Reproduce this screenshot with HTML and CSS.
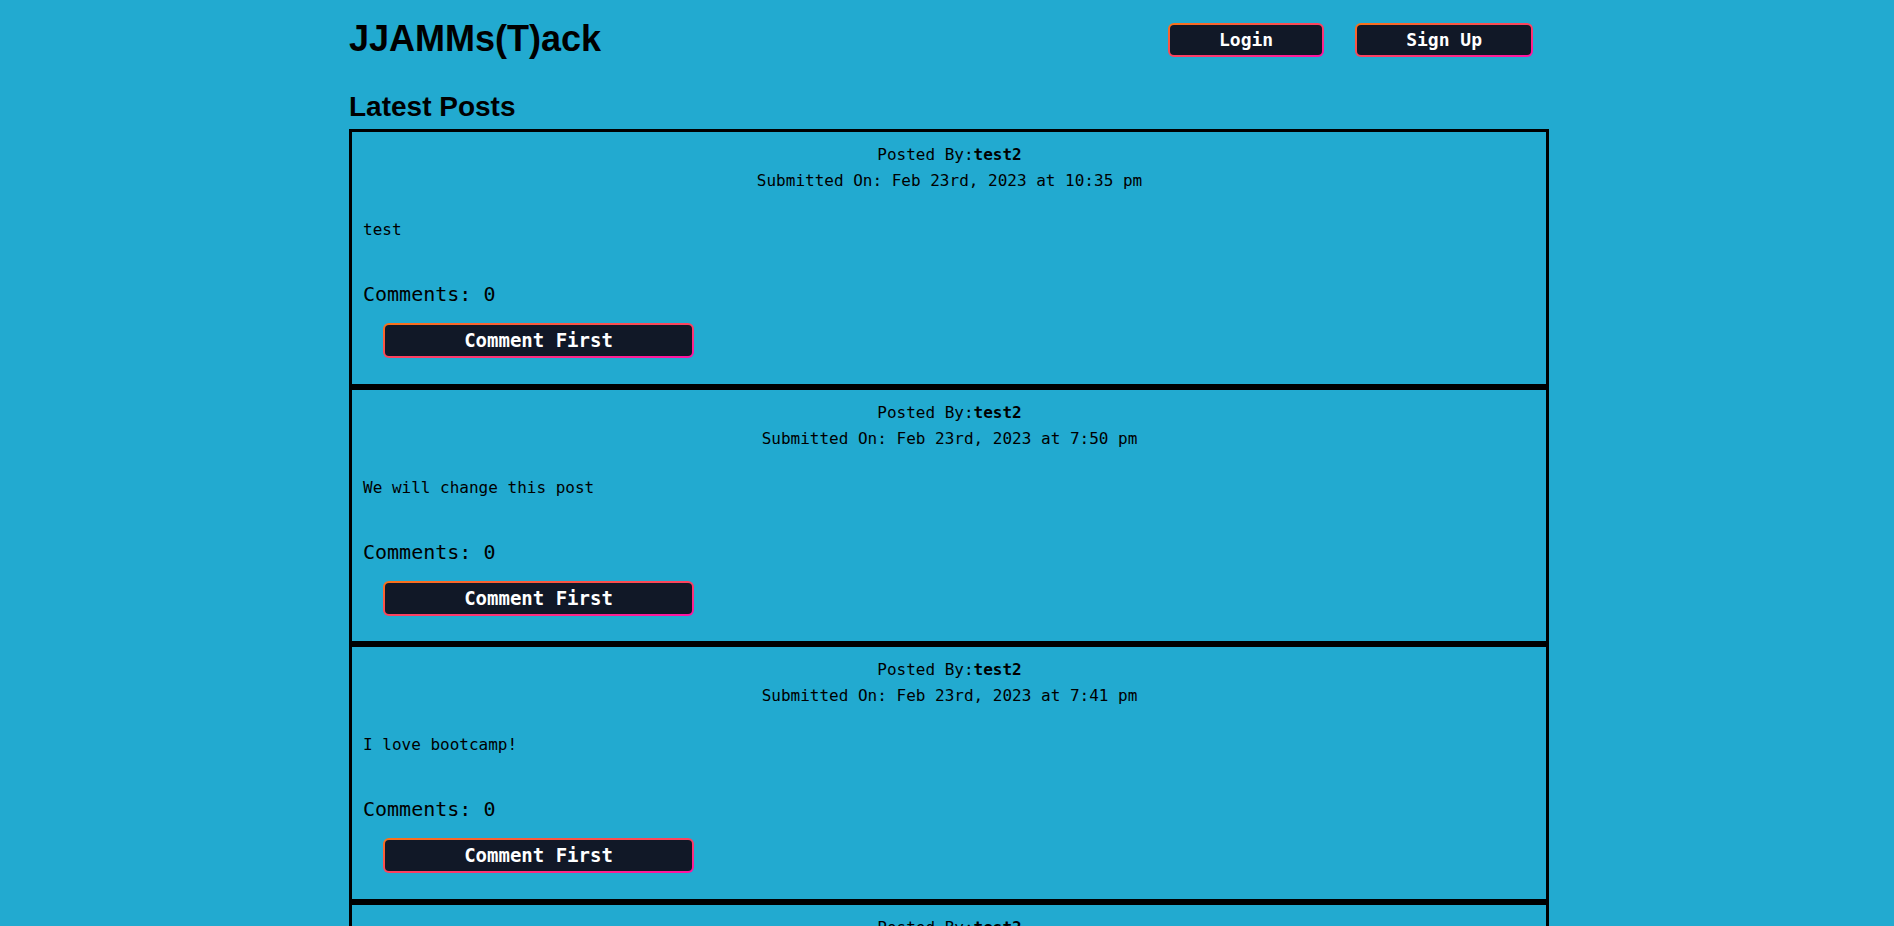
FILE: index.html
```html
<!DOCTYPE html>
<html lang="en">
<head>
<meta charset="utf-8">
<title>JJAMMs(T)ack</title>
<link rel="stylesheet" href="styles.css">
</head>
<body>
<div class="page">
  <header class="topbar">
    <h1 class="brand">JJAMMs(T)ack</h1>
    <nav class="nav">
      <a class="grad-btn nav-btn" href="#"><span>Login</span></a>
      <a class="grad-btn nav-btn" href="#"><span>Sign Up</span></a>
    </nav>
  </header>
  <h2 class="section-title">Latest Posts</h2>
  <div class="posts">
    <article class="post">
      <div class="post-meta">
        <p>Posted By:<strong>test2</strong></p>
        <p>Submitted On: Feb 23rd, 2023 at 10:35 pm</p>
      </div>
      <p class="post-body">test</p>
      <h3 class="comments">Comments: 0</h3>
      <a class="grad-btn comment-btn" href="#"><span>Comment First</span></a>
    </article>
    <article class="post">
      <div class="post-meta">
        <p>Posted By:<strong>test2</strong></p>
        <p>Submitted On: Feb 23rd, 2023 at 7:50 pm</p>
      </div>
      <p class="post-body">We will change this post</p>
      <h3 class="comments">Comments: 0</h3>
      <a class="grad-btn comment-btn" href="#"><span>Comment First</span></a>
    </article>
    <article class="post">
      <div class="post-meta">
        <p>Posted By:<strong>test2</strong></p>
        <p>Submitted On: Feb 23rd, 2023 at 7:41 pm</p>
      </div>
      <p class="post-body">I love bootcamp!</p>
      <h3 class="comments">Comments: 0</h3>
      <a class="grad-btn comment-btn" href="#"><span>Comment First</span></a>
    </article>
    <article class="post">
      <div class="post-meta">
        <p>Posted By:<strong>test2</strong></p>
        <p>Submitted On: Feb 23rd, 2023 at 7:30 pm</p>
      </div>
      <p class="post-body">First post</p>
      <h3 class="comments">Comments: 0</h3>
      <a class="grad-btn comment-btn" href="#"><span>Comment First</span></a>
    </article>
  </div>
</div>
</body>
</html>
```

FILE: styles.css
```css
html, body {
  margin: 0;
  padding: 0;
}

body {
  background: #22aad0;
  color: #000;
  font-family: "DejaVu Sans Mono", "Liberation Mono", monospace;
  overflow: hidden;
}

.page {
  width: 1200px;
  margin: 0 auto;
  padding-left: 4px;
}

.topbar {
  display: flex;
  justify-content: space-between;
  align-items: flex-start;
  padding-top: 19px;
}

.brand {
  margin: 0;
  font-family: "Liberation Sans", Arial, sans-serif;
  font-weight: 700;
  font-size: 36px;
  line-height: 40px;
}

.nav {
  display: flex;
  gap: 31px;
  margin-right: 16px;
  padding-top: 4px;
}

.grad-btn {
  display: inline-block;
  padding: 2px;
  border-radius: 6px;
  background: linear-gradient(to bottom right, #f97316, #ff12a6);
  text-decoration: none;
}

.grad-btn span {
  display: block;
  background: #111827;
  color: #fff;
  font-weight: 700;
  border-radius: 4px;
  text-align: center;
}

.nav-btn span {
  font-size: 18px;
  line-height: 30px;
  padding: 0 49px;
}

.section-title {
  margin: 32px 0 0;
  font-family: "Liberation Sans", Arial, sans-serif;
  font-weight: 700;
  font-size: 28px;
  line-height: 32px;
}

.posts {
  margin-top: 6px;
}

.post {
  border: 3px solid #000;
  padding: 10px 10px 25px 11px;
  box-sizing: border-box;
  height: 257.5px;
}

.post-meta {
  text-align: center;
  font-size: 16px;
  line-height: 26px;
}

.post-meta p {
  margin: 0;
}

.post-body {
  margin: 23px 0 0;
  font-size: 16px;
  line-height: 26px;
}

.comments {
  margin: 37px 0 0;
  font-size: 20px;
  font-weight: 400;
  line-height: 28px;
}

.comment-btn {
  display: block;
  width: 311px;
  box-sizing: border-box;
  margin: 15px 0 0 20px;
}

.comment-btn span {
  font-size: 19px;
  line-height: 31px;
}
```
